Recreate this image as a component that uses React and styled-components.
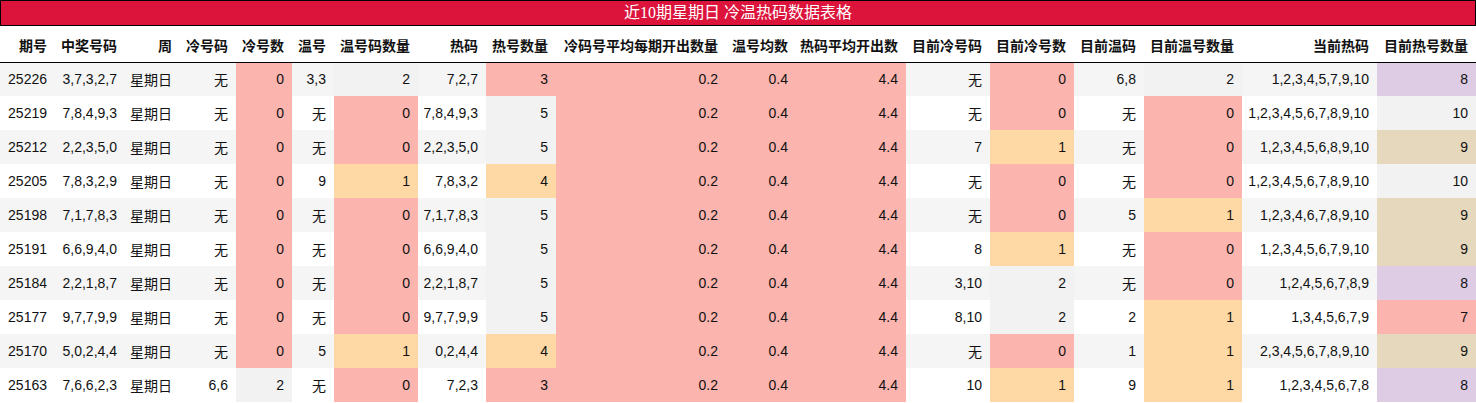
import styled, { createGlobalStyle } from 'styled-components';

const GlobalStyle = createGlobalStyle`
  body {
    margin: 0;
    background: #ffffff;
    font-family: "Liberation Sans", "Noto Sans CJK SC", sans-serif;
  }
`;

const PASTEL1 = ['#fbb4ae', '#b3cde3', '#ccebc5', '#decbe4', '#fed9a6', '#ffffcc', '#e5d8bd', '#fddaec', '#f2f2f2'];

const columns = [
  { title: '期号', width: 55 },
  { title: '中奖号码', width: 70 },
  { title: '周', width: 55 },
  { title: '冷号码', width: 56 },
  { title: '冷号数', width: 56, colored: true },
  { title: '温号', width: 42 },
  { title: '温号码数量', width: 84, colored: true },
  { title: '热码', width: 68 },
  { title: '热号数量', width: 70, colored: true },
  { title: '冷码号平均每期开出数量', width: 170, colored: true },
  { title: '温号均数', width: 70, colored: true },
  { title: '热码平均开出数', width: 110, colored: true },
  { title: '目前冷号码', width: 84 },
  { title: '目前冷号数', width: 84, colored: true },
  { title: '目前温码', width: 70 },
  { title: '目前温号数量', width: 98, colored: true },
  { title: '当前热码', width: 135 },
  { title: '目前热号数量', width: 99, colored: true },
];

const rows = [
  ['25226', '3,7,3,2,7', '星期日', '无', '0', '3,3', '2', '7,2,7', '3', '0.2', '0.4', '4.4', '无', '0', '6,8', '2', '1,2,3,4,5,7,9,10', '8'],
  ['25219', '7,8,4,9,3', '星期日', '无', '0', '无', '0', '7,8,4,9,3', '5', '0.2', '0.4', '4.4', '无', '0', '无', '0', '1,2,3,4,5,6,7,8,9,10', '10'],
  ['25212', '2,2,3,5,0', '星期日', '无', '0', '无', '0', '2,2,3,5,0', '5', '0.2', '0.4', '4.4', '7', '1', '无', '0', '1,2,3,4,5,6,8,9,10', '9'],
  ['25205', '7,8,3,2,9', '星期日', '无', '0', '9', '1', '7,8,3,2', '4', '0.2', '0.4', '4.4', '无', '0', '无', '0', '1,2,3,4,5,6,7,8,9,10', '10'],
  ['25198', '7,1,7,8,3', '星期日', '无', '0', '无', '0', '7,1,7,8,3', '5', '0.2', '0.4', '4.4', '无', '0', '5', '1', '1,2,3,4,6,7,8,9,10', '9'],
  ['25191', '6,6,9,4,0', '星期日', '无', '0', '无', '0', '6,6,9,4,0', '5', '0.2', '0.4', '4.4', '8', '1', '无', '0', '1,2,3,4,5,6,7,9,10', '9'],
  ['25184', '2,2,1,8,7', '星期日', '无', '0', '无', '0', '2,2,1,8,7', '5', '0.2', '0.4', '4.4', '3,10', '2', '无', '0', '1,2,4,5,6,7,8,9', '8'],
  ['25177', '9,7,7,9,9', '星期日', '无', '0', '无', '0', '9,7,7,9,9', '5', '0.2', '0.4', '4.4', '8,10', '2', '2', '1', '1,3,4,5,6,7,9', '7'],
  ['25170', '5,0,2,4,4', '星期日', '无', '0', '5', '1', '0,2,4,4', '4', '0.2', '0.4', '4.4', '无', '0', '1', '1', '2,3,4,5,6,7,8,9,10', '9'],
  ['25163', '7,6,6,2,3', '星期日', '6,6', '2', '无', '0', '7,2,3', '3', '0.2', '0.4', '4.4', '10', '1', '9', '1', '1,2,3,4,5,6,7,8', '8'],
];

// same idea as pandas background_gradient with Pastel1, per column
const ranges = columns.map((col, i) => {
  if (!col.colored) return null;
  const vals = rows.map(r => parseFloat(r[i]));
  return { min: Math.min(...vals), max: Math.max(...vals) };
});

const cellColor = (i, value) => {
  const range = ranges[i];
  if (!range) return null;
  const span = range.max - range.min;
  const t = span === 0 ? 0 : (parseFloat(value) - range.min) / span;
  const idx = Math.min(PASTEL1.length - 1, Math.floor(t * PASTEL1.length));
  return PASTEL1[idx];
};

const Table = styled.table`
  width: 1476px;
  table-layout: fixed;
  border-collapse: collapse;
  border-spacing: 0;
  font-size: 14px;
  color: #111;
`;

const Caption = styled.caption`
  height: 24px;
  line-height: 24px;
  background: #dc143c;
  color: #ffffff;
  border: 1px solid #000;
  font-family: "Liberation Serif", "Noto Sans CJK SC", serif;
  font-size: 16px;
  text-align: center;
`;

const HeadRow = styled.tr`
  height: 36px;
`;

const HeadCell = styled.th`
  padding: 3px 8px 0 0;
  text-align: right;
  font-weight: bold;
  white-space: nowrap;
  border-bottom: 1px solid #000;
`;

const Row = styled.tr`
  height: 34px;
  background: ${p => (p.$striped ? '#f5f5f5' : '#ffffff')};
`;

const Cell = styled.td`
  padding: 0 8px 0 0;
  text-align: right;
  white-space: nowrap;
  background: ${p => p.$bg || 'transparent'};
`;

export default function App() {
  return (
    <>
      <GlobalStyle />
      <Table>
        <Caption>近10期星期日 冷温热码数据表格</Caption>
        <colgroup>
          {columns.map(col => (
            <col key={col.title} style={{ width: col.width }} />
          ))}
        </colgroup>
        <thead>
          <HeadRow>
            {columns.map(col => (
              <HeadCell key={col.title}>{col.title}</HeadCell>
            ))}
          </HeadRow>
        </thead>
        <tbody>
          {rows.map((row, r) => (
            <Row key={row[0]} $striped={r % 2 === 0}>
              {row.map((value, i) => (
                <Cell key={i} $bg={cellColor(i, value)}>{value}</Cell>
              ))}
            </Row>
          ))}
        </tbody>
      </Table>
    </>
  );
}
